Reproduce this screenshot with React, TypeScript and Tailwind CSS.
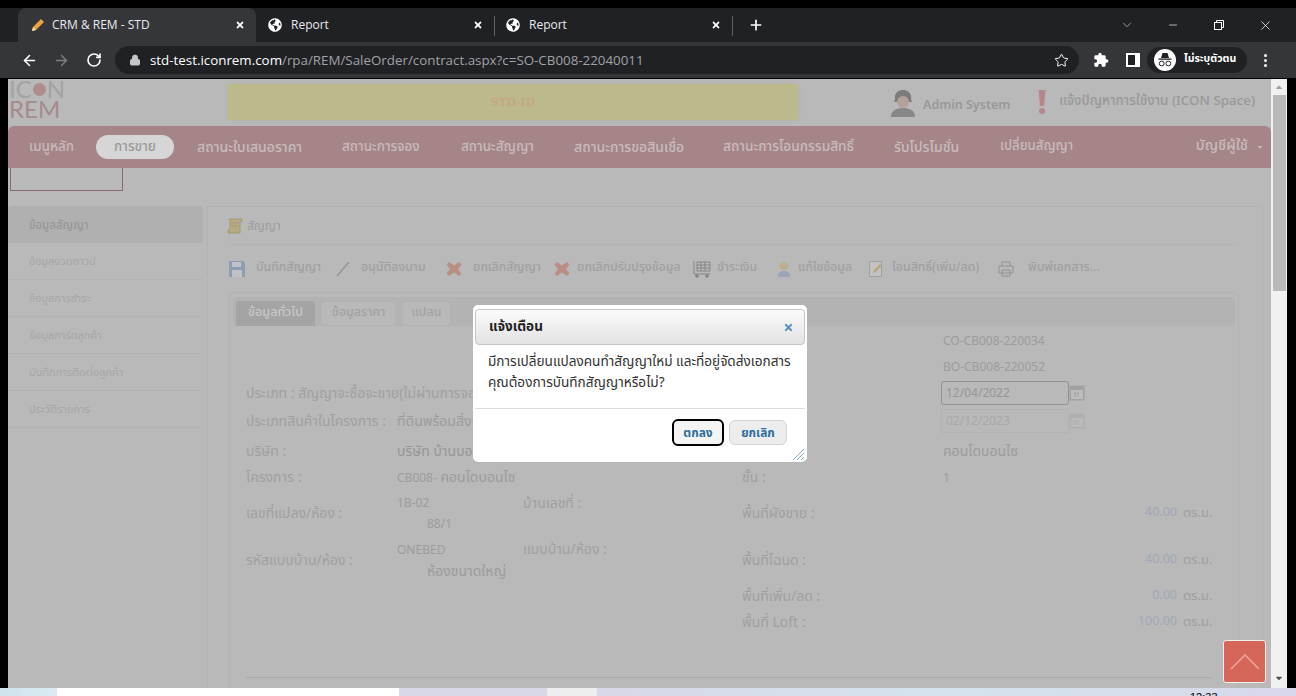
import { ArrowLeft, ArrowRight, ChevronDown, Lock, Minus, Plus, RotateCw, Star, X } from 'lucide-react';
import { FaGlobeAmericas, FaTimes, FaCaretUp, FaCaretDown } from 'react-icons/fa';

const thai = 'font-["Noto_Sans_Thai","Noto_Sans","DejaVu_Sans",sans-serif]';

const navItems = [
  { label: 'เมนูหลัก', cls: 'w-[65px] pl-[21px]' },
  { label: 'การขาย', cls: 'w-[78px] ml-[23px] rounded-full bg-[#d6d6d6] text-[#9a9a9a] justify-center h-[24px]' },
  { label: 'สถานะใบเสนอราคา', cls: 'w-[105px] ml-[23px] text-[14px]' },
  { label: 'สถานะการจอง', cls: 'w-[78px] ml-[40px]' },
  { label: 'สถานะสัญญา', cls: 'w-[73px] ml-[41px]' },
  { label: 'สถานะการขอสินเชื่อ', cls: 'w-[110px] ml-[40px] text-[14px]' },
  { label: 'สถานะการโอนกรรมสิทธิ์', cls: 'w-[132px] ml-[39px] text-[13.7px]' },
  { label: 'รับโปรโมชั่น', cls: 'w-[66px] ml-[39px] text-[14px]' },
  { label: 'เปลี่ยนสัญญา', cls: 'w-[73px] ml-[40px] text-[13.2px]' },
];

const sideItems = ['ข้อมูลงวดดาวน์', 'ข้อมูลการชำระ', 'ข้อมูลการ์ดลูกค้า', 'บันทึกการติดต่อลูกค้า', 'ประวัติรายการ'];

function ChromeTab({ title, active, divider }: { title: string; active?: boolean; divider?: boolean }) {
  return (
    <div className={`relative flex h-[34px] w-[238px] items-center pl-[12px] pr-[11px] ${active ? 'rounded-t-lg bg-[#35363a]' : ''}`}>
      {active ? (
        <svg viewBox="0 0 16 16" className="h-[16px] w-[16px]">
          <path d="M2 14l1-4 8-8 3 3-8 8z" fill="#e8a33d" />
          <path d="M2 14l1-4 3 3z" fill="#f5deb3" />
        </svg>
      ) : (
        <FaGlobeAmericas className="h-[14px] w-[14px] text-white" />
      )}
      <span className={`flex-1 font-['Open_Sans',sans-serif] text-[12px] text-[#e8eaed] ${active ? 'ml-[6px]' : 'ml-[9px]'}`}>{title}</span>
      <FaTimes className="h-[10px] w-[10px] text-white" />
      {divider && <div className="absolute right-[-1px] top-[8px] h-[20px] w-px bg-[#5f6064]" />}
    </div>
  );
}

function ToolItem({ icon, label, cls }: { icon: React.ReactNode; label: string; cls: string }) {
  return (
    <div className={`flex items-center ${cls}`}>
      {icon}
      <span className="whitespace-nowrap text-[12.3px] font-medium text-[#a0a0a0]">{label}</span>
    </div>
  );
}

const CrossIcon = () => (
  <svg viewBox="0 0 16 16" className="h-[16px] w-[16px]">
    <path d="M3 1l5 3.5L13 1l2.5 2.5L12 8l3.5 4.5L13 15l-5-3.5L3 15 .5 12.5 4 8 .5 3.5z" fill="#b98f83" />
  </svg>
);

function FormRow({ h, left, right }: { h: string; left?: React.ReactNode; right?: React.ReactNode }) {
  return (
    <div className={`flex items-center ${h}`}>
      <div className="w-[496px] shrink-0">{left}</div>
      <div className="flex-1">{right}</div>
    </div>
  );
}

function Pair({ label, value }: { label: string; value?: React.ReactNode }) {
  return (
    <div className="flex items-center">
      <span className="w-[151px] shrink-0 whitespace-nowrap text-[#a0a0a0]">{label}</span>
      <span>{value}</span>
    </div>
  );
}

function RightPair({ label, value }: { label: string; value?: React.ReactNode }) {
  return (
    <div className="flex items-center">
      <span className="w-[201px] shrink-0 text-[#a0a0a0]">{label}</span>
      <span>{value}</span>
    </div>
  );
}

function AreaRow({ label, value }: { label: string; value: string }) {
  return (
    <div className="flex items-center">
      <span className="flex-1 text-[#a0a0a0]">{label}</span>
      <span className="text-[12.5px] text-[#a0a7b8]">{value}</span>
      <span className="ml-[6px] w-[29px] whitespace-nowrap text-[13px] text-[#a0a0a0]">ตร.ม.</span>
    </div>
  );
}

function CalendarIcon({ faded }: { faded?: boolean }) {
  return (
    <svg viewBox="0 0 16 16" className={`h-[16px] w-[16px] ${faded ? 'opacity-40' : ''}`}>
      <rect x="0.5" y="0.5" width="15" height="15" fill="#a2a2a2" />
      <rect x="2" y="5" width="12" height="9" fill="#bdbdbd" />
      <path d="M6 7v5M9 7v5" stroke="#9a9a9a" />
    </svg>
  );
}

export default function App() {
  return (
    <div className={`flex h-[696px] w-[1296px] flex-col overflow-hidden bg-black ${thai}`}>
      <div className="h-[8px] shrink-0 bg-black" />

      {/* tab strip */}
      <div className="flex h-[34px] shrink-0 items-center bg-[#202124] pl-[18px] pr-[8px]">
        <ChromeTab title="CRM & REM - STD" active />
        <ChromeTab title="Report" divider />
        <ChromeTab title="Report" divider />
        <Plus className="ml-[16px] h-[16px] w-[16px] text-white" strokeWidth={2.5} />
        <ChevronDown className="ml-[356px] h-[14px] w-[14px] text-[#d0d0d0]" strokeWidth={1.2} />
        <Minus className="ml-[33px] h-[12px] w-[12px] text-white" strokeWidth={1.3} />
        <svg viewBox="0 0 12 12" className="ml-[34px] h-[12px] w-[12px] text-white" fill="none" stroke="currentColor">
          <rect x="1.5" y="3.5" width="7" height="7" />
          <path d="M3.5 3.5v-2h7v7h-2" />
        </svg>
        <X className="ml-[33px] h-[15px] w-[15px] text-white" strokeWidth={1.2} />
      </div>

      {/* address bar */}
      <div className="flex h-[36px] shrink-0 items-center bg-[#35363a] pl-[21px]">
        <ArrowLeft className="h-[17px] w-[17px] text-white" strokeWidth={2.2} />
        <ArrowRight className="ml-[15px] h-[17px] w-[17px] text-[#7f8083]" strokeWidth={2} />
        <RotateCw className="ml-[16px] h-[16px] w-[16px] text-white" strokeWidth={2.4} />
        <div className="ml-[13px] flex h-[28px] w-[964px] items-center rounded-full bg-[#202124] pl-[14px]">
          <Lock className="h-[12px] w-[12px] text-[#c4c6c9]" fill="#c4c6c9" />
          <span className="ml-[9px] font-['Open_Sans',sans-serif] text-[13.35px] text-white">std-test.iconrem.com</span>
          <span className="font-['Open_Sans',sans-serif] text-[13.35px] text-[#a0a2a6]">/rpa/REM/SaleOrder/contract.aspx?c=SO-CB008-22040011</span>
          <Star className="ml-auto mr-[10px] h-[15px] w-[15px] text-white" strokeWidth={1.6} />
        </div>
        <svg viewBox="0 0 24 24" className="ml-[14px] h-[16px] w-[16px]" fill="white">
          <path d="M20.5 11H19V7c0-1.1-.9-2-2-2h-4V3.5C13 2.12 11.88 1 10.5 1S8 2.12 8 3.5V5H4c-1.1 0-1.99.9-1.99 2v3.8H3.5c1.49 0 2.7 1.21 2.7 2.7s-1.21 2.7-2.7 2.7H2V20c0 1.1.9 2 2 2h3.8v-1.5c0-1.49 1.21-2.7 2.7-2.7 1.49 0 2.7 1.21 2.7 2.7V22H17c1.1 0 2-.9 2-2v-4h1.5c1.38 0 2.5-1.12 2.5-2.5S21.88 11 20.5 11z" />
        </svg>
        <svg viewBox="0 0 14 14" className="ml-[17px] h-[14px] w-[14px]">
          <path d="M0 0h14v14H0z" fill="white" />
          <path d="M2 2h7v10H2z" fill="#202124" />
        </svg>
        <div className="ml-[7px] flex h-[26px] w-[100px] items-center rounded-full bg-[#202124] pl-[7px]">
          <svg viewBox="0 0 22 22" className="h-[22px] w-[22px]">
            <circle cx="11" cy="11" r="11" fill="white" />
            <path d="M7 9l1.5-5h5L15 9zM4.5 9.5h13v1.2h-13z" fill="#202124" />
            <circle cx="7.7" cy="14.5" r="2.4" fill="none" stroke="#202124" />
            <circle cx="14.3" cy="14.5" r="2.4" fill="none" stroke="#202124" />
          </svg>
          <span className="ml-[8px] whitespace-nowrap text-[10.5px] font-bold text-white">ไม่ระบุตัวตน</span>
        </div>
        <div className="ml-[17px] flex flex-col gap-[2px]">
          <div className="h-[3px] w-[3px] rounded-full bg-white" />
          <div className="h-[3px] w-[3px] rounded-full bg-white" />
          <div className="h-[3px] w-[3px] rounded-full bg-white" />
        </div>
      </div>

      <div className="h-px shrink-0 bg-[#000]" />

      {/* browser viewport */}
      <div className="relative flex min-h-0 flex-1 pl-[8px] pr-[9px]">
        <div className="flex h-full min-w-0 flex-1 flex-col overflow-hidden bg-[#b9b9b9] text-[14px] text-[#9c9c9c]">
          {/* site header */}
          <div className="flex h-[47px] shrink-0 items-start">
            <div className="ml-[1px] w-[219px] font-['Lato',sans-serif] text-[24px] leading-[20px] text-[#a3a3a3]">
              <div className="flex h-[20px] items-center">
                IC
                <span className="mx-[1px] inline-block h-[13px] w-[13px] rounded-full bg-[#ad8c8c]" />
                N
              </div>
              <div className="text-[#a58b8b]">REM</div>
            </div>
            <div className="mt-[5px] flex h-[36px] w-[570px] items-center justify-center rounded-[3px] bg-[#bcb98b] font-['Liberation_Serif',serif] text-[13px] font-bold text-[#c4a684] shadow-[0_0_4px_#b0b0a0]">
              STD-ID
            </div>
            <svg viewBox="0 0 26 28" className="ml-[92px] mt-[10px] h-[28px] w-[26px]">
              <path d="M5 10c-2-12 18-12 16 0l1 3H4z" fill="#7c7c7c" />
              <circle cx="13" cy="13" r="6" fill="#b3a299" />
              <path d="M1 28c0-7 6-9 12-9s12 2 12 9z" fill="#878787" />
            </svg>
            <span className="ml-[7px] mt-[17px] font-['Noto_Sans',sans-serif] text-[12.5px] font-semibold text-[#989898]">Admin System</span>
            <svg viewBox="0 0 8 26" className="ml-[28px] mt-[10px] h-[26px] w-[8px]">
              <path d="M0.5 1h7l-1.5 16H2z" fill="#b8858a" />
              <circle cx="4" cy="22" r="3" fill="#b8858a" />
            </svg>
            <span className="ml-[13px] mt-[12px] whitespace-nowrap text-[13.4px] font-medium text-[#989898]">แจ้งปัญหาการใช้งาน (ICON Space)</span>
          </div>

          {/* main menu */}
          <div className="flex h-[42px] shrink-0 items-center rounded-t-md bg-[#a58588] text-[13.5px] font-medium text-[#c9bbbc]">
            {navItems.map((item) => (
              <div key={item.label} className={`flex shrink-0 items-center whitespace-nowrap ${item.cls}`}>
                {item.label}
              </div>
            ))}
            <span className="ml-auto whitespace-nowrap text-[14.5px]">บัญชีผู้ใช้</span>
            <FaCaretDown className="ml-[8px] mr-[7px] h-[8px] w-[8px]" />
          </div>

          <div className="ml-[2px] h-[23px] w-[113px] shrink-0 border border-t-0 border-[#8a6a6c]" />

          {/* body */}
          <div className="mt-[15px] flex min-h-0 flex-1">
            <div className="w-[195px] shrink-0 text-[11px] text-[#a6a6a6]">
              <div className="flex h-[37px] items-center rounded-t bg-[#b0b0b0] pl-[21px] pt-[3px] text-[11.5px] font-medium text-[#979797]">ข้อมูลสัญญา</div>
              {sideItems.map((item) => (
                <div key={item} className="flex h-[37px] items-center border-b border-[#b3b3b3] pl-[21px] pt-[3px]">
                  {item}
                </div>
              ))}
            </div>

            <div className="ml-[4px] mr-[8px] flex-1 border-l border-r border-t border-[#b3b3b3] pl-[21px] pr-[23px]">
              <div className="flex h-[38px] items-center border-b border-[#b3b3b3]">
                <svg viewBox="0 0 18 18" className="ml-[-3px] h-[18px] w-[18px]">
                  <path d="M3 2h13v3h-2v11H2v-3h2V4z" fill="#b5aa80" stroke="#a39a74" />
                  <path d="M6 6h6M6 9h6" stroke="#a39a74" />
                </svg>
                <span className="ml-[3px] text-[12px] text-[#9c9c9c]">สัญญา</span>
              </div>

              {/* action toolbar */}
              <div className="flex h-[47px] items-center">
                <ToolItem
                  cls="w-[106px] gap-[11px]"
                  label="บันทึกสัญญา"
                  icon={
                    <svg viewBox="0 0 16 16" className="h-[16px] w-[16px]">
                      <path d="M0 0h14l2 2v14H0z" fill="#8f9db3" />
                      <path d="M3 1h9v5H3zM3 9h10v7H3z" fill="#bfc3c9" />
                    </svg>
                  }
                />
                <ToolItem
                  cls="w-[111px] gap-[10px]"
                  label="อนุมัติลงนาม"
                  icon={
                    <svg viewBox="0 0 16 16" className="h-[16px] w-[16px]">
                      <path d="M2 15L14 1" stroke="#999999" strokeWidth="1.6" />
                    </svg>
                  }
                />
                <ToolItem cls="w-[108px] gap-[11px]" label="ยกเลิกสัญญา" icon={<CrossIcon />} />
                <ToolItem cls="w-[139px] gap-[7px]" label="ยกเลิกปรับปรุงข้อมูล" icon={<CrossIcon />} />
                <ToolItem
                  cls="w-[83px] gap-[6px]"
                  label="ชำระเงิน"
                  icon={
                    <svg viewBox="0 0 18 18" className="h-[18px] w-[18px]" fill="none" stroke="#858585">
                      <path d="M1 1v13h16M4 2h13v9H4zM8 2v9M12 2v9M4 5h13M4 8h13" />
                      <circle cx="4" cy="16" r="1.3" fill="#858585" />
                      <circle cx="14" cy="16" r="1.3" fill="#858585" />
                    </svg>
                  }
                />
                <ToolItem
                  cls="w-[92px] gap-[6px]"
                  label="แก้ไขข้อมูล"
                  icon={
                    <svg viewBox="0 0 16 16" className="h-[16px] w-[16px]">
                      <circle cx="8" cy="5" r="4" fill="#bfae8e" />
                      <path d="M2 16c0-5 3-6 6-6s6 1 6 6z" fill="#9aa5b5" />
                    </svg>
                  }
                />
                <ToolItem
                  cls="w-[130px] gap-[8px]"
                  label="โอนสิทธิ์(เพิ่ม/ลด)"
                  icon={
                    <svg viewBox="0 0 16 16" className="h-[16px] w-[16px]">
                      <path d="M1.5 0.5h12v15h-12z" fill="#c2c2c2" stroke="#a0a0a0" />
                      <path d="M5 12l1-3 6-6 1.5 2-6 6z" fill="#b7a67a" />
                    </svg>
                  }
                />
                <ToolItem
                  cls="gap-[14px]"
                  label="พิมพ์เอกสาร..."
                  icon={
                    <svg viewBox="0 0 16 16" className="h-[16px] w-[16px]" fill="none" stroke="#929292">
                      <path d="M4 5V1h8v4M1 5h14v7H1zM4 9h8v6H4z" />
                    </svg>
                  }
                />
              </div>

              {/* tabbed content */}
              <div className="rounded-t border border-[#b3b3b3] px-[3px] pt-[4px]">
                <div className="flex h-[29px] items-end gap-[6px] rounded bg-[#b3b3b3] pl-[3px] text-[12.5px] font-medium">
                  <div className="flex h-[25px] w-[79px] items-center justify-center rounded-t bg-[#a4a4a4] text-[#c8c8c8]">ข้อมูลทั่วไป</div>
                  <div className="flex h-[25px] w-[75px] items-center justify-center rounded-t border border-[#b3b3b3] bg-[#b9b9b9] text-[#a2a2a2]">ข้อมูลราคา</div>
                  <div className="flex h-[25px] w-[49px] items-center justify-center rounded-t border border-[#b3b3b3] bg-[#b9b9b9] text-[#a2a2a2]">แปลน</div>
                </div>

                <div className="pb-[40px] pl-[13px] pr-[23px] pt-[1px]">
                  <FormRow h="h-[26px]" right={<RightPair label="" value={<span className="text-[12px]">CO-CB008-220034</span>} />} />
                  <FormRow h="h-[26px]" right={<RightPair label="" value={<span className="text-[12px]">BO-CB008-220052</span>} />} />
                  <FormRow
                    h="h-[28px]"
                    left={<span className="whitespace-nowrap text-[#a0a0a0]">ประเภท : สัญญาจะซื้อจะขาย(ไม่ผ่านการจอง)</span>}
                    right={
                      <div className="flex items-center pl-[199px]">
                        <div className="flex h-[24px] w-[128px] items-center rounded-[3px] border border-[#929292] pl-[4px] text-[12px] text-[#969696]">12/04/2022</div>
                        <CalendarIcon />
                      </div>
                    }
                  />
                  <FormRow
                    h="h-[28px]"
                    left={<Pair label="ประเภทสินค้าในโครงการ :" value={<span className="whitespace-nowrap">ที่ดินพร้อมสิ่งปลูกสร้าง</span>} />}
                    right={
                      <div className="flex items-center pl-[199px]">
                        <div className="flex h-[24px] w-[128px] items-center border border-[#b3b3b3] pl-[4px] text-[12px] text-[#a8a8a8]">02/12/2023</div>
                        <CalendarIcon faded />
                      </div>
                    }
                  />
                  <FormRow h="h-[32px]" left={<Pair label="บริษัท :" value={<span className="whitespace-nowrap text-[#969696]">บริษัท บ้านบอนไซ จำกัด</span>} />} right={<RightPair label="" value="คอนโดบอนไซ" />} />
                  <FormRow
                    h="h-[20px]"
                    left={
                      <Pair
                        label="โครงการ :"
                        value={
                          <span className="whitespace-nowrap">
                            <span className="text-[12px]">CB008-</span> คอนโดบอนไซ
                          </span>
                        }
                      />
                    }
                    right={<RightPair label="ชั้น :" value={<span className="text-[12px]">1</span>} />}
                  />
                  <FormRow
                    h="h-[53px]"
                    left={
                      <Pair
                        label="เลขที่แปลง/ห้อง  :"
                        value={
                          <div className="flex flex-col leading-[21px]">
                            <div className="flex">
                              <span className="w-[126px] text-[12px]">1B-02</span>
                              <span className="text-[#a0a0a0]">บ้านเลขที่  :</span>
                            </div>
                            <span className="pl-[30px] text-[12px]">88/1</span>
                          </div>
                        }
                      />
                    }
                    right={<AreaRow label="พื้นที่ผังขาย :" value="40.00" />}
                  />
                  <FormRow
                    h="h-[41px]"
                    left={
                      <Pair
                        label="รหัสแบบบ้าน/ห้อง  :"
                        value={
                          <div className="flex flex-col leading-[22px]">
                            <div className="flex">
                              <span className="w-[126px] text-[12px]">ONEBED</span>
                              <span className="text-[#a0a0a0]">แบบบ้าน/ห้อง  :</span>
                            </div>
                            <span className="whitespace-nowrap pl-[30px]">ห้องขนาดใหญ่</span>
                          </div>
                        }
                      />
                    }
                    right={<AreaRow label="พื้นที่โฉนด :" value="40.00" />}
                  />
                  <FormRow h="h-[31px]" right={<AreaRow label="พื้นที่เพิ่ม/ลด :" value="0.00" />} />
                  <FormRow h="h-[21px]" right={<AreaRow label="พื้นที่ Loft  :" value="100.00" />} />
                  <div className="mt-[44px] border-t border-[#a9a9a9]" />
                </div>
              </div>
            </div>
          </div>
        </div>

        {/* scrollbar */}
        <div className="flex h-full w-[16px] shrink-0 flex-col items-center bg-[#f1f1f1] text-[#505050]">
          <FaCaretUp className="mt-[3px] h-[10px] w-[10px] text-[#a0a0a0]" />
          <div className="mt-[3px] h-[196px] w-[13px] bg-[#b9b9b9]" />
          <FaCaretDown className="mb-[5px] mt-auto h-[10px] w-[10px]" />
        </div>

        {/* modal dialog */}
        <div className="absolute left-[473px] top-[226px] h-[157px] w-[334px] rounded-[5px] bg-white p-[2px] pt-[4px] text-[13.6px] text-[#333]">
          <div className="flex h-[36px] items-center justify-between rounded-[4px] border border-[#c5c5c5] bg-gradient-to-b from-[#fbfbfb] to-[#e2e2e2] pl-[13px] pr-[10px]">
            <span className="text-[13.5px] font-bold text-[#222]">แจ้งเตือน</span>
            <FaTimes className="h-[11px] w-[11px] text-[#5b8fbd]" />
          </div>
          <div className="h-[64px] whitespace-nowrap border-b border-[#dddddd] pl-[13px] pt-[7px] leading-[21px]">
            <p>มีการเปลี่ยนแปลงคนทำสัญญาใหม่ และที่อยู่จัดส่งเอกสาร</p>
            <p>คุณต้องการบันทึกสัญญาหรือไม่?</p>
          </div>
          <div className="flex justify-end gap-[5px] pr-[18px] pt-[10px] text-[12px] font-bold text-[#2e6e9e]">
            <button className="h-[27px] w-[52px] rounded-[6px] border-2 border-black bg-[#f4f4f4]">ตกลง</button>
            <button className="mt-[1px] h-[25px] w-[58px] rounded-[6px] border border-[#d3d3d3] bg-[#ededed]">ยกเลิก</button>
          </div>
          <svg viewBox="0 0 12 12" className="absolute bottom-[2px] right-[3px] h-[12px] w-[12px]" stroke="#6b93ad" strokeWidth="0.8">
            <path d="M1 12L12 1M5 12L12 5M9 12l3-3" />
          </svg>
        </div>

        {/* back to top */}
        <div className="absolute left-[1223px] top-[561px] flex h-[43px] w-[43px] items-center justify-center rounded-[3px] border border-[#f0f0f0] bg-[#d6655a]">
          <svg viewBox="0 0 30 16" className="h-[16px] w-[30px]" fill="none" stroke="#eda59c" strokeWidth="1.5">
            <path d="M1 15L15 1l14 14" />
          </svg>
        </div>
      </div>

      {/* desktop taskbar peeking below the window */}
      <div className="flex h-[8px] shrink-0 overflow-hidden">
        <div className="w-[57px] bg-gradient-to-r from-[#cfe4ee] to-[#dcebf2]" />
        <div className="w-[342px] bg-white" />
        <div className="w-[148px] bg-[#d8d8e8]" />
        <div className="w-[50px] bg-[#eeeeee]" />
        <div className="relative flex-1 bg-gradient-to-r from-[#d8d8e8] via-[#d4e4ee] to-[#d8d8ea]">
          <span className="absolute left-[593px] top-[4px] font-['Liberation_Sans',sans-serif] text-[11px] leading-none text-black">12:33</span>
        </div>
      </div>
    </div>
  );
}
